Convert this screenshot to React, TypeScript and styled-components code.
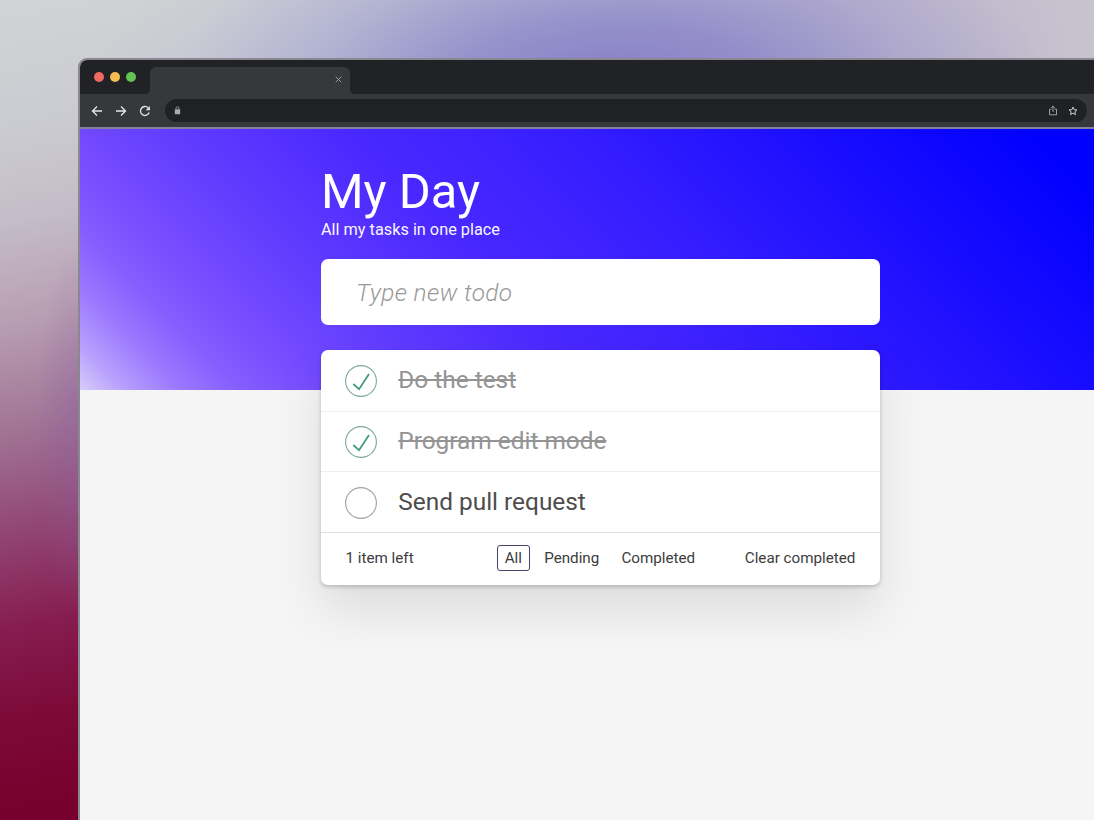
import React, { useState } from "react";
import styled, { createGlobalStyle } from "styled-components";

const GlobalStyle = createGlobalStyle`
  *, *::before, *::after { box-sizing: border-box; }
  html, body { margin: 0; padding: 0; height: 100%; overflow: hidden; }
  body { font-family: Roboto, "Liberation Sans", sans-serif; }
  button, input { font-family: inherit; margin: 0; padding: 0; border: 0; background: none; }
  svg { display: block; flex: none; }
`;

const Backdrop = styled.div`
  height: 100vh;
  overflow: hidden;
  padding: 58px 0 0 78px;
  background:
    radial-gradient(ellipse 50px 190px at 84px 430px, rgba(136, 92, 164, 0.42), rgba(136, 92, 164, 0.2) 50%, rgba(136, 92, 164, 0) 100%),
    radial-gradient(ellipse 520px 230px at 610px 90px, rgba(130, 122, 198, 0.95), rgba(136, 132, 202, 0.8) 30%, rgba(158, 158, 210, 0.5) 60%, rgba(180, 184, 214, 0.16) 84%, rgba(190, 194, 214, 0) 100%),
    radial-gradient(ellipse 260px 160px at 810px 0, rgba(178, 150, 192, 0.4), rgba(178, 150, 192, 0) 100%),
    linear-gradient(90deg, rgba(200, 196, 206, 0) 760px, rgba(200, 196, 206, 1) 1094px) 0 0 / 100% 60px no-repeat,
    linear-gradient(169deg, #d2d3d4 0, #cbccd2 120px, #c4bcc8 220px, #b89eb2 320px, #a27696 420px, #924874 520px, #861c50 620px, #7c0a38 710px, #78002c 800px);
`;

const BrowserWindow = styled.div`
  display: flex;
  flex-direction: column;
  width: 1060px;
  height: 800px;
  border: 2px solid #8b8790;
  border-radius: 9px 0 0 0;
  overflow: hidden;
  background: #f5f5f5;
`;

const TabStrip = styled.div`
  display: flex;
  align-items: flex-end;
  height: 34px;
  padding-left: 14px;
  background: #202226;
`;

const TrafficLights = styled.div`
  display: flex;
  gap: 6px;
  width: 56px;
  padding-bottom: 12px;
`;

const Light = styled.span<{ $color: string }>`
  width: 10px;
  height: 10px;
  border-radius: 50%;
  background: ${(p) => p.$color};
`;

const Tab = styled.div`
  position: relative;
  display: flex;
  align-items: center;
  justify-content: flex-end;
  width: 200px;
  height: 27px;
  padding: 0 8px 2px 0;
  border-radius: 6px 6px 0 0;
  background: #37383c;

  &::before,
  &::after {
    content: "";
    position: absolute;
    bottom: 0;
    width: 4px;
    height: 4px;
  }
  &::before {
    left: -4px;
    background: radial-gradient(circle at 0 0, transparent 3.6px, #37383c 4px);
  }
  &::after {
    right: -4px;
    background: radial-gradient(circle at 100% 0, transparent 3.6px, #37383c 4px);
  }
`;

const Toolbar = styled.div`
  display: flex;
  align-items: center;
  gap: 12px;
  height: 35px;
  padding: 0 0 0 11px;
  background: #37383c;
  border-bottom: 2px solid #8580a0;
`;

const AddressBar = styled.div`
  display: flex;
  align-items: center;
  justify-content: space-between;
  width: 922px;
  height: 23px;
  margin-left: 2px;
  padding: 0 9px;
  border-radius: 12px;
  background: #202124;
`;

const PageActions = styled.div`
  display: flex;
  align-items: center;
  gap: 10.5px;
`;

const Page = styled.div`
  flex: 1;
  width: 1014px;
  background: #f5f5f5;
`;

const Hero = styled.div`
  height: 261px;
  padding: 39px 0 0 241px;
  background: linear-gradient(45deg, #d8ccfa 0, #b8a0fc 3.5%, #9a78ff 8%, #845cff 13%, #7249ff 20%, #5e3aff 29%, #4a28ff 41%, #3e22ff 52%, #2c18ff 65%, #180cff 79%, #0000ff 95%);
`;

const Title = styled.h1`
  margin: 0;
  color: #fff;
  font-size: 48.8px;
  font-weight: 400;
  line-height: 48px;
`;

const Subtitle = styled.p`
  margin: 4px 0 0;
  color: #f8f6ff;
  font-size: 16.3px;
  font-weight: 400;
  line-height: 20px;
`;

const NewTodo = styled.input`
  display: block;
  width: 559.4px;
  height: 66px;
  margin-top: 19.4px;
  padding: 0 35px;
  border-radius: 7px;
  background: #fff;
  color: #4d4d4d;
  font-size: 24.4px;
  outline: none;

  &::placeholder {
    color: #999;
    opacity: 1;
    font-style: italic;
    font-weight: 300;
    letter-spacing: 0.36px;
  }
`;

const Card = styled.section`
  width: 559.4px;
  margin-top: 25px;
  border-radius: 7px;
  background: #fff;
  box-shadow: 0 2px 4px rgba(0, 0, 0, 0.2), 0 25px 50px rgba(0, 0, 0, 0.1);
`;

const TodoRow = styled.div`
  display: flex;
  align-items: center;
  gap: 21.3px;
  height: 60.6px;
  padding: 2px 24px 0;
  border-bottom: 1px solid #ededed;

  &:first-child { height: 61.2px; }
  &:nth-child(3) { border-bottom-color: #dedede; }
`;

const TodoLabel = styled.span<{ $done: boolean }>`
  padding-bottom: 2px;
  color: ${(p) => (p.$done ? "#949494" : "#4d4d4d")};
  font-size: 24.4px;
  line-height: 30px;
  text-decoration: ${(p) => (p.$done ? "line-through" : "none")};
`;

const CardFooter = styled.footer`
  display: grid;
  grid-template-columns: 151.5px 1fr auto;
  align-items: center;
  height: 52.6px;
  padding: 0 25px 2px 24.5px;
  color: #3c3c3c;
  font-size: 15.2px;
`;

const Filters = styled.div`
  display: flex;
  gap: 6.8px;
`;

const FilterButton = styled.button<{ $active?: boolean }>`
  height: 26px;
  padding: 0 6.7px;
  border: 1px solid ${(p) => (p.$active ? "#45456a" : "transparent")};
  border-radius: 3px;
  color: inherit;
  font-size: inherit;
`;

const ClearButton = styled.button`
  color: inherit;
  font-size: inherit;
`;

const Check = ({ done }: { done: boolean }) => (
  <svg width="32" height="32" viewBox="0 0 32 32" fill="none">
    <circle cx="16" cy="16" r="15.4" stroke={done ? "#7ba89a" : "#a0a0a0"} strokeWidth="1.1" />
    {done && <path d="M8.3 19 L14 24.2 L24 9" stroke="#429c7c" strokeWidth="1.8" />}
  </svg>
);

const stroke = { fill: "none", stroke: "#e4e5e8", strokeWidth: 1.3 };

const BackIcon = () => (
  <svg width="12" height="12" viewBox="0 0 12 12" {...stroke}>
    <path d="M11 6H1.5M6 1.5 1.5 6 6 10.5" />
  </svg>
);

const ForwardIcon = () => (
  <svg width="12" height="12" viewBox="0 0 12 12" {...stroke}>
    <path d="M1 6H10.5M6 1.5 10.5 6 6 10.5" />
  </svg>
);

const ReloadIcon = () => (
  <svg width="12" height="12" viewBox="0 0 12 12" {...stroke}>
    <path d="M10.2 7.6A4.5 4.5 0 1 1 9.2 2.8" />
    <path d="M10.9 1V5.2H6.7Z" fill="#e4e5e8" stroke="none" />
  </svg>
);

const LockIcon = () => (
  <svg width="7" height="9" viewBox="0 0 7 9">
    <rect x="0.8" y="3.2" width="5.4" height="5" rx="0.5" fill="#a8a9ac" />
    <path d="M2 3.5V2.3A1.5 1.5 0 0 1 5 2.3V3.5" fill="none" stroke="#a8a9ac" strokeWidth="0.8" />
  </svg>
);

const ShareIcon = () => (
  <svg width="10" height="11" viewBox="0 0 10 11" fill="none" stroke="#a8a9ac" strokeWidth="0.9">
    <path d="M3.3 4.2H1.5V9.8H8.5V4.2H6.7M5 7V1.2M3.2 2.9 5 1.1 6.8 2.9" />
  </svg>
);

const StarIcon = () => (
  <svg width="10" height="10" viewBox="0 0 10 10" fill="none" stroke="#dcdde0" strokeWidth="0.9">
    <path d="M5 1 6.1 3.7 9 3.9 6.8 5.8 7.5 8.7 5 7.1 2.5 8.7 3.2 5.8 1 3.9 3.9 3.7Z" />
  </svg>
);

const CloseIcon = () => (
  <svg width="7" height="7" viewBox="0 0 7 7" fill="none" stroke="#a4a5a8" strokeWidth="0.9">
    <path d="M0.7 0.7 6.3 6.3M6.3 0.7 0.7 6.3" />
  </svg>
);

const todos = [
  { text: "Do the test", done: true },
  { text: "Program edit mode", done: true },
  { text: "Send pull request", done: false },
];

const filters = ["All", "Pending", "Completed"];

export default function App() {
  const [filter, setFilter] = useState("All");
  return (
    <Backdrop>
      <GlobalStyle />
      <BrowserWindow>
        <TabStrip>
          <TrafficLights>
            <Light $color="#ee6a5f" />
            <Light $color="#f5bd4f" />
            <Light $color="#61c454" />
          </TrafficLights>
          <Tab>
            <CloseIcon />
          </Tab>
        </TabStrip>
        <Toolbar>
          <BackIcon />
          <ForwardIcon />
          <ReloadIcon />
          <AddressBar>
            <LockIcon />
            <PageActions>
              <ShareIcon />
              <StarIcon />
            </PageActions>
          </AddressBar>
        </Toolbar>
        <Page>
          <Hero>
            <Title>My Day</Title>
            <Subtitle>All my tasks in one place</Subtitle>
            <NewTodo placeholder="Type new todo" />
            <Card>
              {todos.map((todo) => (
                <TodoRow key={todo.text}>
                  <Check done={todo.done} />
                  <TodoLabel $done={todo.done}>{todo.text}</TodoLabel>
                </TodoRow>
              ))}
              <CardFooter>
                <span>1 item left</span>
                <Filters>
                  {filters.map((name) => (
                    <FilterButton key={name} $active={name === filter} onClick={() => setFilter(name)}>
                      {name}
                    </FilterButton>
                  ))}
                </Filters>
                <ClearButton>Clear completed</ClearButton>
              </CardFooter>
            </Card>
          </Hero>
        </Page>
      </BrowserWindow>
    </Backdrop>
  );
}
